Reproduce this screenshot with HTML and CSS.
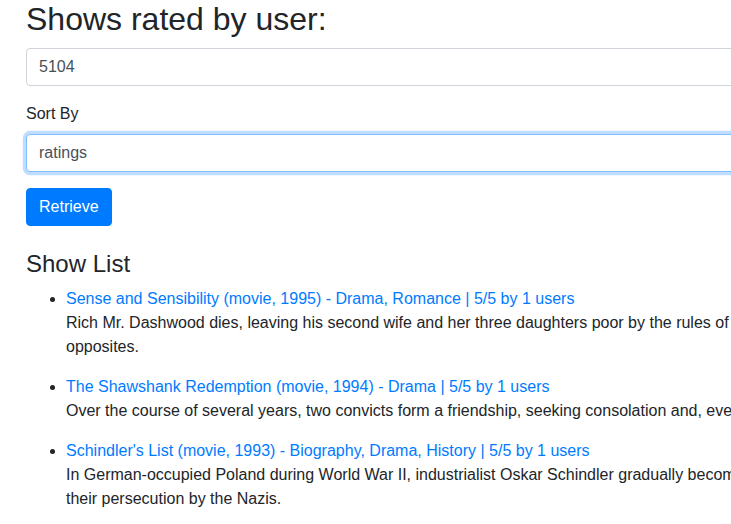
FILE: index.html
```html
<!DOCTYPE html>
<html lang="en">
<head>
<meta charset="utf-8">
<title>Shows rated by user</title>
<link rel="stylesheet" href="styles.css">
</head>
<body>
<div class="page">
  <h2 class="title">Shows rated by user:</h2>
  <div class="form-group">
    <input class="form-control" type="text" value="5104" readonly>
  </div>
  <div class="form-group">
    <label class="label">Sort By</label>
    <input class="form-control focused" type="text" value="ratings" readonly>
  </div>
  <button class="btn" type="button">Retrieve</button>

  <h4 class="list-title">Show List</h4>
  <ul class="shows">
    <li>
      <a class="show-link" href="#">Sense and Sensibility (movie, 1995) - Drama, Romance | 5/5 by 1 users</a>
      <p class="desc">Rich Mr. Dashwood dies, leaving his second wife and her three daughters poor by the rules of inheritance. The two eldest daughters are the title opposites.</p>
    </li>
    <li>
      <a class="show-link" href="#">The Shawshank Redemption (movie, 1994) - Drama | 5/5 by 1 users</a>
      <p class="desc">Over the course of several years, two convicts form a friendship, seeking consolation and, eventually, redemption through basic compassion.</p>
    </li>
    <li>
      <a class="show-link" href="#">Schindler's List (movie, 1993) - Biography, Drama, History | 5/5 by 1 users</a>
      <p class="desc">In German-occupied Poland during World War II, industrialist Oskar Schindler gradually becomes concerned for his Jewish workforce after witnessing their persecution by the Nazis.</p>
    </li>
  </ul>
</div>
</body>
</html>
```

FILE: styles.css
```css
html {
  overflow: hidden;
}
body {
  margin: 0;
  padding-left: 26px;
  font-family: "Liberation Sans", Arial, sans-serif;
  font-size: 16px;
  line-height: 1.5;
  color: #212529;
  background: #fff;
}
.page {
  width: 1110px;
}
.title {
  margin: 0 0 10px;
  font-size: 32px;
  font-weight: 500;
  line-height: 38px;
}
.form-group {
  margin-bottom: 16px;
}
.label {
  display: block;
  margin-bottom: 8px;
}
.form-control {
  display: block;
  box-sizing: border-box;
  width: 100%;
  height: 38px;
  padding: 6px 12px;
  margin: 0;
  font-family: inherit;
  font-size: 16px;
  line-height: 1.5;
  color: #495057;
  background: #fff;
  border: 1px solid #ced4da;
  border-radius: 4px;
  outline: none;
}
.form-control.focused {
  border-color: #80bdff;
  box-shadow: 0 0 0 3.2px rgba(0, 123, 255, 0.25);
}
.btn {
  display: block;
  box-sizing: border-box;
  height: 38px;
  padding: 6px 12px;
  font-family: inherit;
  font-size: 16px;
  line-height: 1.5;
  color: #fff;
  background: #007bff;
  border: 1px solid #007bff;
  border-radius: 4px;
}
.list-title {
  margin: 24px 0 8px;
  font-size: 24px;
  font-weight: 500;
  line-height: 28.8px;
}
.shows {
  margin: 0;
  padding-left: 40px;
}
.show-link {
  display: block;
  color: #007bff;
  text-decoration: none;
}
.desc {
  margin: 0 0 16px;
}
```
